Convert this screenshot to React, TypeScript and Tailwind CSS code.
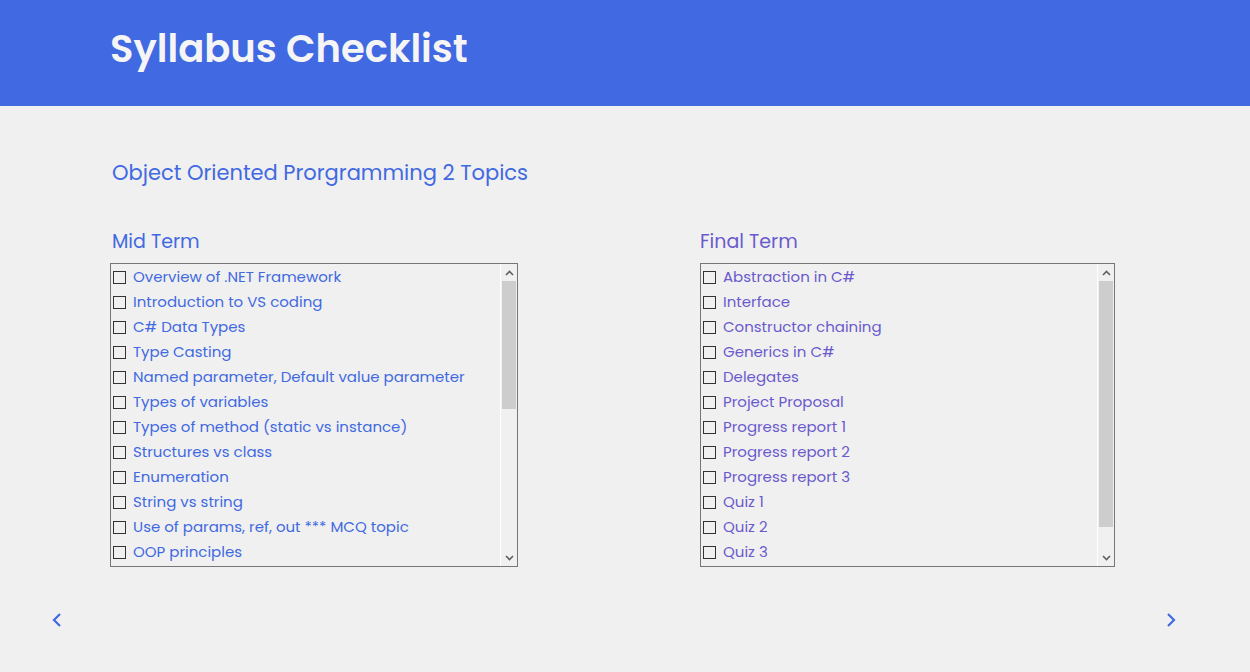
import React from 'react'

const midTerm = [
  'Overview of .NET Framework',
  'Introduction to VS coding',
  'C# Data Types',
  'Type Casting',
  'Named parameter, Default value parameter',
  'Types of variables',
  'Types of method (static vs instance)',
  'Structures vs class',
  'Enumeration',
  'String vs string',
  'Use of params, ref, out *** MCQ topic',
  'OOP principles',
]

const finalTerm = [
  'Abstraction in C#',
  'Interface',
  'Constructor chaining',
  'Generics in C#',
  'Delegates',
  'Project Proposal',
  'Progress report 1',
  'Progress report 2',
  'Progress report 3',
  'Quiz 1',
  'Quiz 2',
  'Quiz 3',
]

function Arrow({ up }: { up?: boolean }) {
  return (
    <svg width="9" height="6" viewBox="0 0 9 6" className="block">
      <path
        d={up ? 'M1 5 L4.5 1.5 L8 5' : 'M1 1 L4.5 4.5 L8 1'}
        fill="none"
        stroke="#606060"
        strokeWidth="1.6"
      />
    </svg>
  )
}

function ChecklistBox({
  items,
  width,
  color,
  thumb,
}: {
  items: string[]
  width: string
  color: string
  thumb: string
}) {
  return (
    <div className={`flex h-[304px] border border-[#767676] ${width}`}>
      <ul className="flex-1 overflow-hidden pl-[2px] pt-[1px]">
        {items.map((t) => (
          <li key={t} className="flex h-[25px] items-center gap-[7px]">
            <span className="h-[13px] w-[13px] shrink-0 border border-[#333333]" />
            <span className={`whitespace-nowrap text-[15px] ${color}`}>{t}</span>
          </li>
        ))}
      </ul>
      <div className="flex w-[17px] flex-col items-center border-l border-white bg-[#f0f0f0]">
        <div className="flex h-[17px] items-center justify-center">
          <Arrow up />
        </div>
        <div className="w-full flex-1 px-[1px]">
          <div className={`w-full bg-[#cdcdcd] ${thumb}`} />
        </div>
        <div className="flex h-[17px] items-center justify-center">
          <Arrow />
        </div>
      </div>
    </div>
  )
}

export default function App() {
  return (
    <div
      className="min-h-[672px] bg-[#f0f0f0]"
      style={{ fontFamily: 'Poppins, Inter, "Noto Sans", sans-serif' }}
    >
      <header className="flex h-[106px] items-center bg-[#4169e1] pl-[110px]">
        <h1 className="pb-[8px] text-[38.5px] font-semibold text-[#f5f5f5]">Syllabus Checklist</h1>
      </header>

      <main className="pl-[112px] pt-[51px]">
        <h2 className="text-[21px] text-[#4169e1]">Object Oriented Prorgramming 2 Topics</h2>

        <div className="mt-[39px] flex gap-[182px]">
          <section className="-ml-[2px]">
            <h3 className="mb-[7px] pl-[2px] text-[19px] text-[#4169e1]">Mid Term</h3>
            <ChecklistBox items={midTerm} width="w-[408px]" color="text-[#4169e1]" thumb="h-[128px]" />
          </section>
          <section>
            <h3 className="mb-[7px] text-[19px] text-[#6a5acd]">Final Term</h3>
            <ChecklistBox items={finalTerm} width="w-[415px]" color="text-[#6a5acd]" thumb="h-[246px]" />
          </section>
        </div>
      </main>

      <div className="flex justify-between pl-[51px] pr-[73px] pt-[45px]">
        <svg width="12" height="16" viewBox="0 0 12 16">
          <path d="M9 2 L3 8 L9 14" fill="none" stroke="#4169e1" strokeWidth="2.2" />
        </svg>
        <svg width="12" height="16" viewBox="0 0 12 16">
          <path d="M3 2 L9 8 L3 14" fill="none" stroke="#4169e1" strokeWidth="2.2" />
        </svg>
      </div>
    </div>
  )
}
